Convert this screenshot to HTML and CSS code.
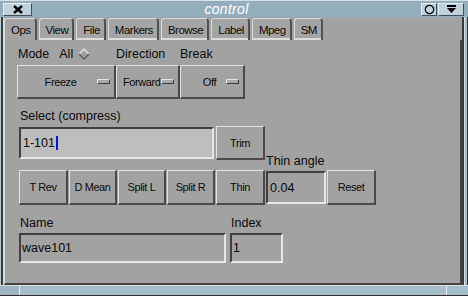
FILE: index.html
```html
<!DOCTYPE html>
<html lang="en">
<head>
    <meta charset="UTF-8">
    <title>control</title>
    <link rel="stylesheet" href="styles.css">
</head>
<body>
    <div class="window">
        <div class="titlebar">
            <div class="tb-btn tb-close">
                <svg width="10" height="9" viewBox="0 0 10 9"><path d="M1 1 L9 8 M9 1 L1 8" stroke="#000" stroke-width="2.4"/></svg>
            </div>
            <div class="tb-title">control</div>
            <div class="tb-btn tb-iconify">
                <svg width="11" height="11" viewBox="0 0 11 11"><circle cx="5.5" cy="5.5" r="4.2" fill="none" stroke="#000" stroke-width="1.2"/></svg>
            </div>
            <div class="tb-btn tb-menu">
                <svg width="11" height="8" viewBox="0 0 11 8"><rect x="1" y="0" width="9" height="2" fill="#000"/><path d="M1 3 L10 3 L5.5 8 Z" fill="#000"/></svg>
            </div>
        </div>

        <div class="middle">
            <div class="edge-left"></div>
            <div class="frame">
                <div class="tabs">
                    <div class="tab active">Ops</div>
                    <div class="tab">View</div>
                    <div class="tab">File</div>
                    <div class="tab">Markers</div>
                    <div class="tab">Browse</div>
                    <div class="tab">Label</div>
                    <div class="tab">Mpeg</div>
                    <div class="tab">SM</div>
                </div>

                <div class="panel">
                    <div class="label-row">
                        <div class="col col-mode">
                            <span>Mode</span>
                            <span class="all">All</span>
                            <svg class="diamond" width="12" height="12" viewBox="0 0 12 12">
                                <path d="M1 6 L6 1 L11 6" fill="none" stroke="#e4e4e4" stroke-width="1.3"/>
                                <path d="M1 6 L6 11 L11 6" fill="none" stroke="#5a5a5a" stroke-width="1.3"/>
                            </svg>
                        </div>
                        <div class="col col-dir">Direction</div>
                        <div class="col">Break</div>
                    </div>

                    <div class="option-row">
                        <div class="btn option w-freeze"><span class="opt-text">Freeze</span><span class="indicator"></span></div>
                        <div class="btn option w-forward"><span class="opt-text">Forward</span><span class="indicator"></span></div>
                        <div class="btn option w-off"><span class="opt-text">Off</span><span class="indicator"></span></div>
                    </div>

                    <div class="field-label select-label">Select (compress)</div>
                    <div class="row-select">
                        <div class="input input-select">1-101<span class="cursor"></span></div>
                        <div class="btn w49">Trim</div>
                    </div>

                    <div class="row-ops">
                        <div class="btn w49">T Rev</div>
                        <div class="btn w48">D Mean</div>
                        <div class="btn w48">Split L</div>
                        <div class="btn w48">Split R</div>
                        <div class="btn w49">Thin</div>
                        <div class="thin-col">
                            <div class="field-label">Thin angle</div>
                            <div class="input input-thin">0.04</div>
                        </div>
                        <div class="btn w49">Reset</div>
                    </div>

                    <div class="row-name">
                        <div class="name-col">
                            <div class="field-label">Name</div>
                            <div class="input input-name">wave101</div>
                        </div>
                        <div class="index-col">
                            <div class="field-label">Index</div>
                            <div class="input input-index">1</div>
                        </div>
                    </div>
                </div>
            </div>
            <div class="edge-right"></div>
        </div>

        <div class="bottom">
            <div class="seg seg-left"></div>
            <div class="seg seg-mid"></div>
            <div class="seg seg-right"></div>
        </div>
    </div>
</body>
</html>
```

FILE: styles.css
```css
* {
    margin: 0;
    padding: 0;
    box-sizing: border-box;
}

body {
    font-family: 'Liberation Sans', Arial, sans-serif;
    background: #a2a2a2;
    color: #0a0a0a;
}

.window {
    width: 468px;
    height: 296px;
    display: flex;
    flex-direction: column;
    background: #a9c0cc;
}

/* title bar */
.titlebar {
    height: 17px;
    display: flex;
    align-items: center;
    padding: 0 4px 0 3px;
    border-top: 1px solid #d6e2e8;
    background-color: #a7bfcd;
    background-image: radial-gradient(circle, #7c99ab 0.6px, transparent 0.8px);
    background-size: 2px 2px;
}

.tb-btn {
    height: 13px;
    display: flex;
    align-items: center;
    justify-content: center;
    background: #bfd2dc;
    border-top: 1px solid #e4edf1;
    border-left: 1px solid #e4edf1;
    border-right: 1px solid #3e4e58;
    border-bottom: 1px solid #3e4e58;
}

.tb-close {
    width: 29px;
}

.tb-iconify {
    width: 16px;
    margin-right: 1px;
}

.tb-menu {
    width: 26px;
}

.tb-title {
    flex: 1;
    text-align: center;
    color: #fff;
    font-style: italic;
    font-size: 14px;
    line-height: 15px;
    letter-spacing: 0.3px;
}

/* frame */
.middle {
    flex: 1;
    display: flex;
}

.edge-left {
    width: 4px;
    background: linear-gradient(to right, #b9ccd6 0, #b9ccd6 1px, #3a3a3a 1px, #3a3a3a 3px, #dcdcdc 3px);
}

.edge-right {
    width: 6px;
    background: linear-gradient(to right, #3a3a3a 0, #3a3a3a 2px, #d0dde4 2px, #d0dde4 3px, #a9c0cc 3px, #a9c0cc 5px, #2e2e2e 5px);
}

.frame {
    flex: 1;
    display: flex;
    flex-direction: column;
    background: #a2a2a2;
}

.tabs {
    height: 23px;
    display: flex;
    align-items: flex-end;
    gap: 2px;
    background: #a2a2a2;
}

.tab {
    height: 22px;
    padding: 0 4px 0 6px;
    display: flex;
    align-items: center;
    font-size: 11.5px;
    letter-spacing: -0.5px;
    background: #a4a4a4;
    border-top: 1px solid #dcdcdc;
    border-left: 1px solid #dcdcdc;
    border-right: 2px solid #505050;
    border-radius: 3px 4px 0 0;
    box-shadow: inset 0 -2px 0 #dcdcdc;
}

.tab.active {
    box-shadow: none;
}

.panel {
    flex: 1;
    padding: 7px 0 0 12px;
    border-right: 2px solid #444;
    border-bottom: 2px solid #444;
    border-left: 1px solid #dcdcdc;
}

.label-row {
    display: flex;
    height: 14px;
    font-size: 12.5px;
    line-height: 14px;
}

.col {
    display: flex;
    align-items: center;
}

.col-mode {
    width: 99px;
    padding-left: 1px;
}

.col-dir {
    width: 64px;
}

.all {
    margin-left: 10px;
}

.diamond {
    margin-left: 5px;
}

/* buttons */
.btn {
    display: flex;
    align-items: center;
    justify-content: center;
    font-size: 11px;
    letter-spacing: -0.4px;
    background: #a2a2a2;
    border-top: 1px solid #e2e2e2;
    border-left: 1px solid #e2e2e2;
    border-right: 2px solid #4a4a4a;
    border-bottom: 2px solid #4a4a4a;
}

.option-row {
    display: flex;
    height: 34px;
    margin-top: 4px;
}

.option {
    padding-right: 4px;
}

.opt-text {
    flex: 1;
    text-align: center;
}

.indicator {
    width: 13px;
    height: 5px;
    background: #a8a8a8;
    border-top: 1px solid #e6e6e6;
    border-left: 1px solid #e6e6e6;
    border-right: 1px solid #3c3c3c;
    border-bottom: 1px solid #3c3c3c;
}

.w-freeze { width: 99px; }
.w-forward { width: 64px; }
.w-off { width: 65px; }
.w-forward .opt-text { text-align: left; padding-left: 6px; }
.w-freeze .opt-text { padding-left: 6px; }
.w-off .opt-text { padding-left: 12px; }

.w49 { width: 49px; }
.w48 { width: 48px; }

/* fields */
.field-label {
    font-size: 12.5px;
    line-height: 14px;
}

.select-label {
    margin: 10px 0 0 3px;
}

.input {
    display: flex;
    align-items: center;
    font-size: 12.5px;
    padding-left: 2px;
    background: #a2a2a2;
    border-top: 2px solid #404040;
    border-left: 2px solid #404040;
    border-right: 2px solid #e6e6e6;
    border-bottom: 2px solid #e6e6e6;
}

.row-select {
    display: flex;
    align-items: center;
    height: 34px;
    margin: 3px 0 0 2px;
    gap: 2px;
}

.input-select {
    width: 195px;
    height: 32px;
    background: #bdbdbd;
}

.cursor {
    width: 2px;
    height: 14px;
    margin-left: 1px;
    background: #1010c8;
}

.row-select .btn {
    height: 34px;
}

.row-ops {
    display: flex;
    align-items: flex-end;
    gap: 1px;
    margin: -6px 0 0 2px;
}

.row-ops .btn {
    height: 35px;
}

.thin-col {
    width: 60px;
    margin-bottom: 1px;
}

.thin-col .field-label {
    margin-bottom: 3px;
}

.input-thin {
    height: 33px;
}

.row-name {
    display: flex;
    gap: 4px;
    margin: 11px 0 0 2px;
}

.row-name .field-label {
    margin: 0 0 3px 1px;
}

.name-col {
    width: 207px;
}

.index-col {
    width: 53px;
}

.input-name,
.input-index {
    height: 30px;
    padding-left: 1px;
}

/* bottom resize strip */
.bottom {
    height: 11px;
    display: flex;
    border-top: 1px solid #dcdcdc;
    border-bottom: 1px solid #2e2e2e;
}

.seg {
    border-right: 1px solid #e8eef2;
    background: #a6bdca;
}

.seg-left { width: 20px; background: #9fb5c2; }
.seg-mid { width: 427px; }
.seg-right { flex: 1; border-right: none; }
```
